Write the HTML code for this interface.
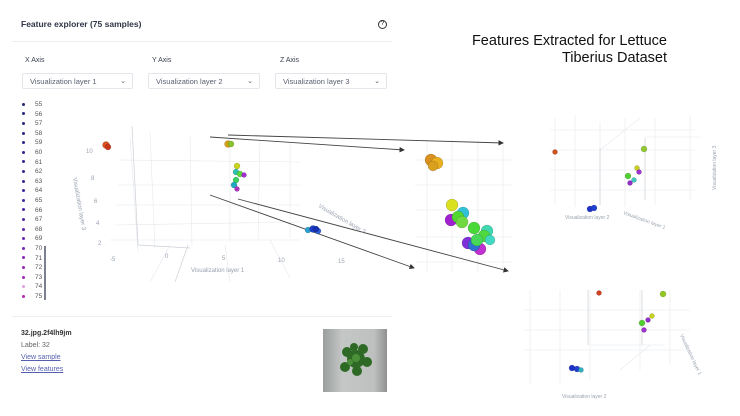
<!DOCTYPE html>
<html><head><meta charset="utf-8"><style>
body{margin:0;width:740px;height:416px;background:#fff;position:relative;overflow:hidden;font-family:"Liberation Sans",sans-serif;}
.a{position:absolute;white-space:nowrap}
.sel{position:absolute;top:73px;height:16px;border:1px solid #e3e6ea;border-radius:2px;font-size:7.5px;color:#5a6070;line-height:16px;padding-left:7px;box-sizing:border-box}
.sel span{position:absolute;right:6px;top:0;font-size:7px}
.lg{position:absolute;left:22px;font-size:6.5px;color:#555}
.lg i{display:inline-block;width:3px;height:3px;border-radius:50%;margin-right:10px;vertical-align:middle}
</style></head><body>
<div class="a" style="left:21px;top:19px;font-size:8.5px;color:#2f3545;font-weight:bold">Feature explorer (75 samples)</div>
<div class="a" style="left:378px;top:20px;width:7px;height:7px;border:1px solid #333;border-radius:50%;font-size:6px;line-height:7px;text-align:center">?</div>
<div class="a" style="left:12px;top:41px;width:380px;height:1px;background:#eceef1"></div>
<div class="a" style="left:25px;top:57px;font-size:7px;color:#3a4050">X Axis</div>
<div class="a" style="left:152px;top:57px;font-size:7px;color:#3a4050">Y Axis</div>
<div class="a" style="left:280px;top:57px;font-size:7px;color:#3a4050">Z Axis</div>
<div class="sel" style="left:22px;width:111px">Visualization layer 1<span>⌄</span></div>
<div class="sel" style="left:148px;width:112px">Visualization layer 2<span>⌄</span></div>
<div class="sel" style="left:275px;width:112px">Visualization layer 3<span>⌄</span></div>
<div id="lg"></div>
<div class="a" style="left:44px;top:246px;width:2px;height:54px;background:#7a8090"></div>
<div class="a" style="left:12px;top:316px;width:380px;height:1px;background:#eceef1"></div>
<div class="a" style="left:21px;top:330px;font-size:7px;color:#333;font-weight:bold">32.jpg.2f4lh9jm</div>
<div class="a" style="left:21px;top:342px;font-size:7px;color:#666">Label: 32</div>
<div class="a" style="left:21px;top:354px;font-size:7px;color:#5560b0;text-decoration:underline">View sample</div>
<div class="a" style="left:21px;top:366px;font-size:7px;color:#5560b0;text-decoration:underline">View features</div>
<div class="a" style="left:323px;top:329px;width:64px;height:63px;background:linear-gradient(90deg,#9a9e9c,#c4c7c5 30%,#bdc0be 80%,#8e918f)"></div>
<svg class="a" style="left:323px;top:329px" width="64" height="63"><g fill="#2e6a25"><circle cx="33" cy="30" r="9"/><circle cx="24" cy="23" r="5"/><circle cx="40" cy="20" r="5"/><circle cx="44" cy="33" r="5"/><circle cx="34" cy="42" r="5"/><circle cx="22" cy="38" r="5"/><circle cx="31" cy="18" r="4"/></g><g fill="#4b8f3a"><circle cx="33" cy="29" r="4"/><circle cx="27" cy="33" r="3"/></g></svg>
<div class="a" style="right:73px;top:33px;font-size:14.5px;color:#111;text-align:right;line-height:17px">Features Extracted for Lettuce<br>Tiberius Dataset</div>
<svg class="a" style="left:0;top:0" width="740" height="416">
<defs><marker id="ar" markerWidth="6" markerHeight="6" refX="5" refY="3" orient="auto"><path d="M0,0 L6,3 L0,6z" fill="#333"/></marker></defs>
<g stroke="#e6e8ec" stroke-width="0.6" fill="none">
<path d="M130 137 L138 252 M150 132 L155 248 M190 135 L192 245 M230 138 L230 242 M260 140 L258 240 M290 143 L290 238 M120 160 L300 162 M118 185 L300 185 M116 205 L300 205 M115 225 L300 222 M110 240 L300 240 M170 245 L150 282 M225 245 L230 282 M270 240 L290 278"/>
<path d="M427 140 V272 M452 140 V272 M478 140 V272 M503 140 V272 M415 160 H512 M415 185 H512 M415 210 H512 M415 237 H512 M415 262 H512"/>
<path d="M555 118 V205 M575 115 V207 M600 122 V205 M625 118 V207 M655 118 V205 M690 115 V200 M550 130 H695 M550 150 H695 M550 170 H695 M550 190 H695 M600 150 L640 118 M645 137 H700"/>
<path d="M530 290 V385 M560 290 V385 M590 290 V380 M640 290 V370 M670 290 V365 M525 310 H690 M525 330 H690 M525 350 H690 M590 345 H665 M620 370 L650 345"/>
</g>
<g stroke="#ccd0d6" stroke-width="0.7" fill="none"><path d="M132 126 L138 245 L190 248 M188 245 L175 282 M600 148 V205 M645 138 V200 M588 290 V345 M642 290 V345"/></g>
<g stroke="#444" stroke-width="0.9" fill="none" marker-end="url(#ar)">
<path d="M210 137 L404 150"/><path d="M228 135 L503 143"/><path d="M210 195 L414 268"/><path d="M238 199 L508 271"/>
</g>
<g font-family="Liberation Sans" font-size="6" fill="#9aa2b0">
<text x="86" y="153">10</text><text x="91" y="180">8</text><text x="94" y="203">6</text><text x="96" y="225">4</text><text x="98" y="245">2</text>
<text x="110" y="261">-5</text><text x="165" y="258">0</text><text x="222" y="260">5</text><text x="278" y="262">10</text><text x="338" y="263">15</text>
<text x="191" y="272">Visualization layer 1</text>
<text x="0" y="0" transform="translate(73,178) rotate(80)">Visualization layer 3</text>
<text x="0" y="0" transform="translate(318,207) rotate(30)">Visualization layer 2</text>
<text x="565" y="219" font-size="5">Visualization layer 2</text>
<text x="0" y="0" font-size="5" transform="translate(623,214) rotate(20)">Visualization layer 1</text>
<text x="0" y="0" font-size="5" transform="translate(716,190) rotate(-90)">Visualization layer 3</text>
<text x="562" y="398" font-size="5">Visualization layer 2</text>
<text x="0" y="0" font-size="5" transform="translate(680,335) rotate(65)">Visualization layer 1</text>
</g>
<g stroke="rgba(0,0,0,0.3)" stroke-width="0.4">
<circle cx="106" cy="145" r="3.5" fill="#d9531e"/><circle cx="108" cy="147" r="3" fill="#c8361a"/>
<circle cx="228" cy="144" r="3.5" fill="#d4a017"/><circle cx="231" cy="144" r="3" fill="#8bc32a"/>
<circle cx="237" cy="166" r="3" fill="#c8d41e"/><circle cx="236" cy="172" r="3" fill="#2cc0b0"/><circle cx="240" cy="174" r="3" fill="#5ad83a"/><circle cx="244" cy="175" r="2.5" fill="#a030d0"/><circle cx="236" cy="180" r="3" fill="#38d060"/><circle cx="234" cy="185" r="3" fill="#20a8c0"/><circle cx="237" cy="189" r="2.5" fill="#b030c0"/>
<circle cx="308" cy="230" r="3" fill="#2aa0d0"/><circle cx="313" cy="229" r="3.5" fill="#1d3fc8"/><circle cx="318" cy="231" r="3" fill="#2a60d8"/><circle cx="316" cy="229" r="3" fill="#1530b0"/>
<circle cx="431" cy="160" r="6" fill="#d9901e"/><circle cx="437" cy="163" r="6" fill="#e8b020"/><circle cx="433" cy="166" r="5" fill="#d9a020"/>
<circle cx="452" cy="205" r="6" fill="#d8e020"/><circle cx="463" cy="213" r="6" fill="#30c0d8"/><circle cx="451" cy="220" r="6" fill="#a020d0"/><circle cx="458" cy="217" r="6" fill="#50d830"/><circle cx="462" cy="222" r="6" fill="#70d840"/>
<circle cx="474" cy="228" r="6" fill="#48d838"/><circle cx="487" cy="231" r="6" fill="#40d8b0"/><circle cx="484" cy="236" r="6" fill="#50d840"/><circle cx="468" cy="243" r="6" fill="#8030d8"/><circle cx="480" cy="249" r="6" fill="#c030d0"/><circle cx="474" cy="245" r="6" fill="#3070d0"/><circle cx="477" cy="240" r="6" fill="#48d858"/><circle cx="490" cy="240" r="5" fill="#40d8c0"/>
<circle cx="555" cy="152" r="2.5" fill="#d0501e"/><circle cx="644" cy="149" r="3" fill="#90c830"/>
<circle cx="637" cy="168" r="2.5" fill="#c8d020"/><circle cx="628" cy="176" r="3" fill="#50d030"/><circle cx="634" cy="180" r="2.5" fill="#40c8c0"/><circle cx="639" cy="172" r="2.5" fill="#a030d0"/><circle cx="630" cy="183" r="2.5" fill="#9030c8"/>
<circle cx="590" cy="209" r="3" fill="#1d30c8"/><circle cx="594" cy="208" r="3" fill="#2040d0"/>
<circle cx="599" cy="293" r="2.5" fill="#d0401e"/><circle cx="663" cy="294" r="3" fill="#90c820"/>
<circle cx="652" cy="316" r="2.5" fill="#c8d020"/><circle cx="642" cy="323" r="3" fill="#50d030"/><circle cx="648" cy="320" r="2.5" fill="#9030c8"/><circle cx="644" cy="330" r="2.5" fill="#a030d0"/>
<circle cx="572" cy="368" r="3" fill="#1d30c8"/><circle cx="577" cy="369" r="3" fill="#2040d0"/><circle cx="581" cy="370" r="2.5" fill="#30b0c0"/>
</g>
</svg>
<script>
var c=["#26287a","#26287a","#28287e","#2a2882","#2c2886","#2e288a","#30288e","#342892","#382896","#3c289a","#40289e","#4a28a2","#5428a6","#6028aa","#6c28ae","#7a28b2","#8828b6","#9628b8","#a428bc","#e0a0e0","#b428b0"];
var h="";for(var i=0;i<21;i++){h+='<div class="lg" style="top:'+(101+i*9.6)+'px"><i style="background:'+c[i]+'"></i>'+(55+i)+'</div>';}
document.getElementById("lg").innerHTML=h;
</script>
</body></html>
